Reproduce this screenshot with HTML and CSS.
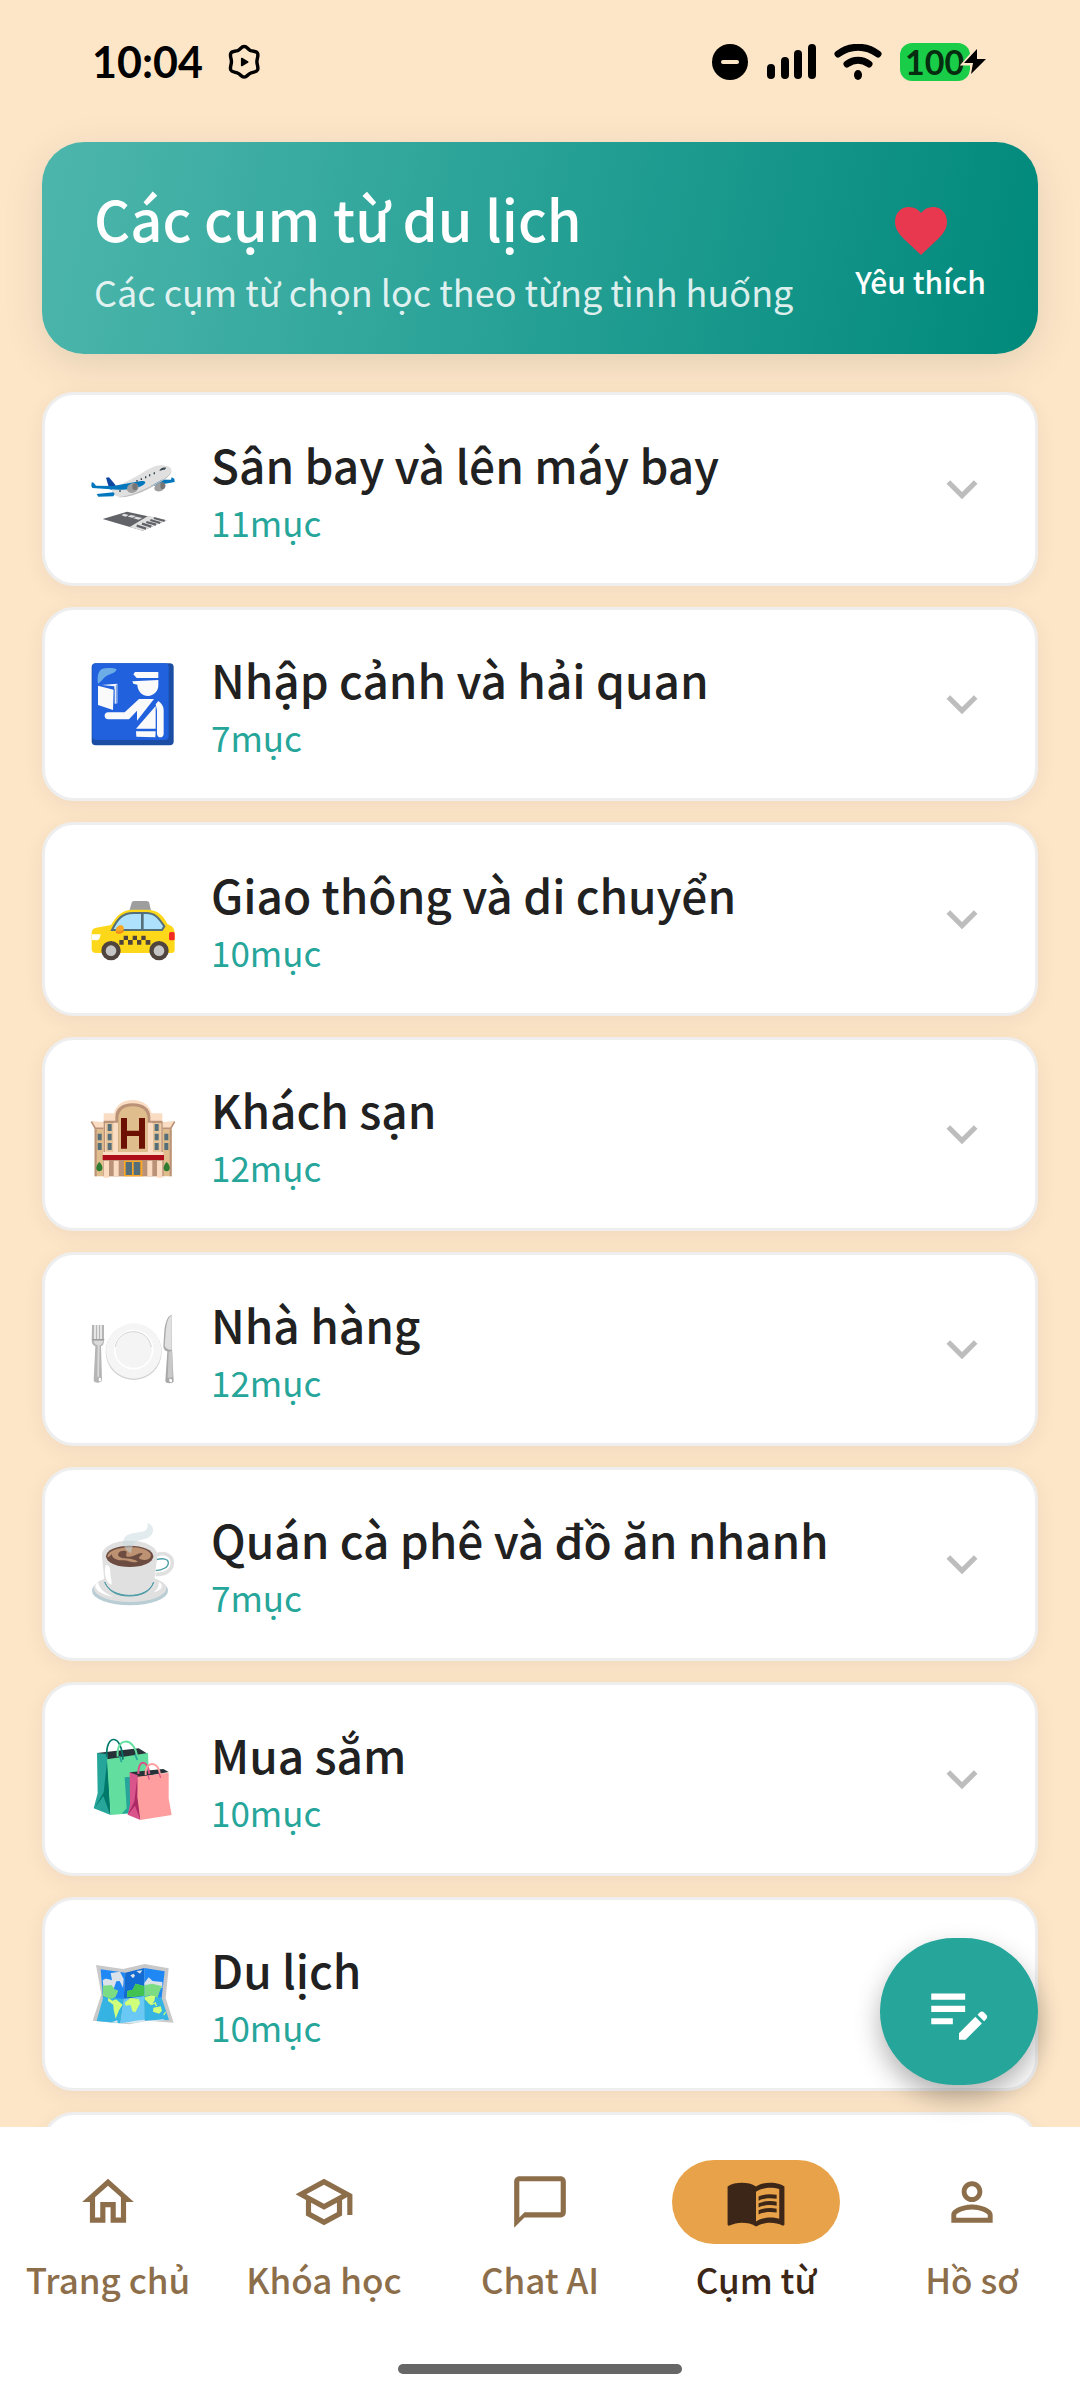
FILE: index.html
```html
<!DOCTYPE html>
<html lang="vi">

<head>
    <meta charset="UTF-8">
    <meta name="viewport" content="width=device-width, initial-scale=1.0">
    <title>Các cụm từ du lịch</title>
    <link rel="stylesheet" href="styles.css">
</head>

<body>
    <div class="app">
        <div class="status">
            <div class="status-left">
                <span class="clock">10:04</span>
                <svg class="hex" width="32" height="36" viewBox="662 136 93 104">
                    <path d="M709 143c9 0 10 8 19 12 9 3 17 1 20 8 3 8-2 15-2 24s5 16 2 24c-3 7-11 5-20 9-9 3-10 12-19 12s-10-9-19-12c-9-4-17-2-20-9-3-8 2-15 2-24s-5-16-2-24c3-7 11-5 20-8 9-4 10-12 19-12z" fill="none" stroke="#000" stroke-width="10"/>
                    <path d="M702 178l17 10-17 10z" stroke="#000" stroke-width="5" stroke-linejoin="round"/>
                </svg>
            </div>
            <div class="status-right">
                <svg class="dnd" width="36" height="36" viewBox="0 0 36 36">
                    <circle cx="18" cy="18" r="18"/>
                    <path d="M11 18h14" stroke="#fde6c8" stroke-width="4" stroke-linecap="round"/>
                </svg>
                <svg class="signal" width="50" height="36" viewBox="0 0 50 36">
                    <path d="M5 24v7M19 17v14M32 10v21M46 4v27" stroke="#000" stroke-width="8" stroke-linecap="round"/>
                </svg>
                <svg class="wifi" width="48" height="36" viewBox="0 0 48 36">
                    <path d="M4 10c12-9 28-9 40 0M13 20c7-5 15-5 22 0" fill="none" stroke="#000" stroke-width="7" stroke-linecap="round"/>
                    <ellipse cx="24" cy="31" rx="4" ry="5"/>
                </svg>
                <div class="battery">
                    <span>100</span>
                    <svg class="bolt" width="30" height="32" viewBox="0 0 30 32">
                        <path d="M17 2L3 18h9l-1 11L27 13h-9z" stroke="#fde6c8" stroke-width="3"/>
                        <path d="M17 3L4 17h9l-2 11L26 13h-9z"/>
                    </svg>
                </div>
            </div>
        </div>

        <header class="banner">
            <div>
                <h1>Các cụm từ du lịch</h1>
                <p>Các cụm từ chọn lọc theo từng tình huống</p>
            </div>
            <button class="favorite" type="button">
                <svg width="52" height="48" viewBox="0 0 52 48">
                    <path d="M26 48L9 32C3 26 0 21 0 15 0 6 6 0 14 0c5 0 9 2 12 6 3-4 7-6 12-6 8 0 14 6 14 15 0 6-3 11-9 17z" fill="#e8384f"/>
                </svg>
                Yêu thích
            </button>
        </header>

        <main class="content">
            <div class="list">
                <button class="card" type="button">
                    <!-- plane taking off -->
                    <svg class="emoji" viewBox="184 199 252 252">
                        <path d="M229 291l9-1 20 24-8 14-11-3z" fill="#0d47a1"/>
                        <path d="M340 296l84 1 2-7 8 4 1 10-70 13z" fill="#0277bd"/>
                        <path d="M247 326c25-14 70-35 103-57 20-12 42-18 55-14 13 1 20 5 20 14-3 14-25 27-55 44-35 19-68 35-92 36-21 0-32-8-31-23z" fill="#e0e0e0"/>
                        <path d="M265 349c40-3 83-24 122-46 22-12 37-24 38-35 2 16-20 30-53 48-35 20-77 37-107 33z" fill="#bdbdbd"/>
                        <path d="M389 271c3-8 9-12 21-10l-5 6c-6 0-10 2-16 4z" fill="#37474f"/>
                        <path d="M186 305l6 1 7 9 50 1 86-15c10-1 15 2 10 8-10 12-50 18-80 18l-77-5-3-6z" fill="#0277bd"/>
                        <path d="M201 340l50-5 4 5-4 7-45 1z" fill="#0277bd"/>
                        <ellipse cx="309" cy="322" rx="18" ry="14" fill="#9e9e9e" transform="rotate(-25 309 322)"/>
                        <ellipse cx="316" cy="318" rx="8" ry="10" fill="#757575"/>
                        <ellipse cx="391" cy="319" rx="18" ry="12" fill="#9e9e9e" transform="rotate(-25 391 319)"/>
                        <ellipse cx="399" cy="315" rx="7" ry="10" fill="#757575"/>
                        <path d="M322 298v5M335 293v5M348 287v6M360 281v6M374 275v6M271 328v6" stroke="#37474f" stroke-width="4"/>
                        <path d="M219 415l73-22 119 26-72 31z" fill="#616368"/>
                        <path d="M355 406l56 13-72 31-39-11z" fill="#e0e0e0"/>
                        <path d="M373 412l32 9M362 418l30 9M350 424l29 8M337 429l28 9M321 435l28 9" stroke="#616368" stroke-width="7"/>
                        <path d="M283 399l14 4-9 5-13-4zM303 403l16 3-10 5-15-3zM320 408l18 4-11 5-16-4z" fill="#e0e0e0"/>
                    </svg>
                    <span class="text"><span class="title">Sân bay và lên máy bay</span><span class="count">11mục</span></span>
                    <svg class="chevron" viewBox="0 0 24 24"><path d="M7.41 8.59L12 13.17l4.59-4.58L18 10l-6 6-6-6z"/></svg>
                </button>

                <button class="card" type="button">
                    <!-- passport control -->
                    <svg class="emoji" viewBox="184 846 252 252">
                        <rect x="186" y="850" width="246" height="246" rx="12" fill="#1a4da3"/>
                        <rect x="188" y="850" width="229" height="230" rx="12" fill="#2161de"/>
                        <path d="M205 911c-3-22 1-39 12-44 13-5 36-4 44 1-3 10-12 11-27 18-15 8-14 16-29 25z" fill="#6cade8"/>
                        <g fill="#fafafa">
                            <path d="M205 917l47 12-2 61-45-15z"/>
                            <path d="M215 915l48-4v59l-9 1v-52z"/>
                            <path d="M316 876h70v18h-65l-10-11z"/>
                            <path d="M308 904l78-4v16c0 18-14 32-31 32s-31-14-32-34l-12-3z"/>
                            <path d="M328 957h45l-51 65v-30l-24 26h-62c-15 0-15-21 0-21h49z"/>
                            <path d="M378 978v68h-59zM319 1054h59l-1 18-57-2z"/>
                            <path d="M386 963c11 8 16 16 16 28v70c0 15-20 14-20 0v-70l-4-18z"/>
                        </g>
                        <path d="M205 914l49 13v63M260 914v55" fill="none" stroke="#2161de" stroke-width="2"/>
                    </svg>
                    <span class="text"><span class="title">Nhập cảnh và hải quan</span><span class="count">7mục</span></span>
                    <svg class="chevron" viewBox="0 0 24 24"><path d="M7.41 8.59L12 13.17l4.59-4.58L18 10l-6 6-6-6z"/></svg>
                </button>

                <button class="card" type="button">
                    <!-- taxi -->
                    <svg class="emoji" viewBox="184 201 252 252">
                        <path d="M299 302l8-27 6-2h39l6 3 6 26z" fill="#9e9e9e"/>
                        <path d="M186 367c1-9 6-12 14-14l44-8c18-30 35-46 65-46h42c31 0 49 15 63 44 15 5 21 13 21 28v50c0 5-4 8-9 8H200c-10 0-14-5-14-13z" fill="#fdd81a"/>
                        <path d="M247 360c17-35 32-51 64-51h38c27 0 38 14 55 40l-7 11z" fill="#aee2fc" stroke="#546e7a" stroke-width="6"/>
                        <path d="M338 307v53" stroke="#546e7a" stroke-width="8"/>
                        <path d="M187 373h26c-2 12-5 19-12 18l-14-1z" fill="#fff"/>
                        <rect x="418" y="366" width="17" height="25" rx="5" fill="#f22c24"/>
                        <path d="M257 365c2-14 9-21 19-19 7 2 8 10 4 19-4 8-16 8-23 0z" fill="#f9a825"/>
                        <path d="M259 366c8 3 17 2 22-4" fill="none" stroke="#ef8c1a" stroke-width="6"/>
                        <path d="M282 377h13v13h-13zM309 377h13v13h-13zM335 377h13v13h-13zM269 390h13v14h-13zM295 390h14v14h-14zM322 390h13v14h-13zM348 390h14v14h-14z" fill="#4e433d"/>
                        <circle cx="244" cy="422" r="29" fill="#50443e"/>
                        <circle cx="244" cy="422" r="16" fill="#c5c5c5"/>
                        <circle cx="388" cy="422" r="29" fill="#50443e"/>
                        <circle cx="388" cy="422" r="16" fill="#c5c5c5"/>
                    </svg>
                    <span class="text"><span class="title">Giao thông và di chuyển</span><span class="count">10mục</span></span>
                    <svg class="chevron" viewBox="0 0 24 24"><path d="M7.41 8.59L12 13.17l4.59-4.58L18 10l-6 6-6-6z"/></svg>
                </button>

                <button class="card" type="button">
                    <!-- hotel -->
                    <svg class="emoji" viewBox="184 846 252 252">
                        <path d="M195 950h231v149H195z" fill="#dfbd8c"/>
                        <path d="M198 950v149M423 950v149" stroke="#ba9278" stroke-width="6"/>
                        <path d="M184 933l38 3v22h-26zM436 933l-38 3v22h27z" fill="#fadcc3"/>
                        <path d="M185 935l12 20h25M435 935l-12 20h-25" fill="none" stroke="#ba9278" stroke-width="5"/>
                        <path d="M222 1040V910h31c6-25 27-40 56-40s50 15 57 40h32v130z" fill="#fadcc3"/>
                        <path d="M222 932h35v-10c0-27 20-42 52-42s53 15 53 42v10h36v8h-36v90H257v-90h-35z" fill="#ba9278"/>
                        <path d="M266 1030V925c0-23 17-36 43-36s45 13 45 36v105z" fill="#dfbd8c"/>
                        <path d="M228 940h23v85h-23zM370 940h23v85h-23z" fill="#e6c499"/>
                        <path d="M252 938h13v90h-13zM354 938h14v90h-14z" fill="#fadcc3"/>
                        <path d="M224 936v94M397 936v94" stroke="#ba9278" stroke-width="4"/>
                        <path d="M234 942h12v21h-12zM234 971h12v20h-12zM234 999h12v21h-12zM375 942h12v21h-12zM375 971h12v20h-12zM375 999h12v21h-12zM204 971h12v20h-12zM204 999h12v21h-12zM404 971h12v20h-12zM404 999h12v21h-12z" fill="#546e7a"/>
                        <path d="M274 924h18v38h36v-38h18v92h-18v-38h-36v38h-18z" fill="#6d1104"/>
                        <path d="M220 1026h182v73H220z" fill="#ba9278"/>
                        <path d="M220 1026h182v9H220z" fill="#fadcc3"/>
                        <path d="M222 1052h16v51h-16zM252 1052h15v47h-15zM353 1052h15v47h-15zM382 1052h16v51h-16z" fill="#fadcc3"/>
                        <path d="M219 1035h184v15H219z" fill="#ad0d18"/>
                        <path d="M283 1052h55v47h-55z" fill="#ffa726"/>
                        <path d="M288 1056h19v39h-19zM312 1056h20v39h-20z" fill="#546e7a"/>
                        <path d="M209 1056c14 12 11 28 0 28s-13-16 0-28zM411 1056c14 12 11 28 0 28s-13-16 0-28z" fill="#2e7d32"/>
                    </svg>
                    <span class="text"><span class="title">Khách sạn</span><span class="count">12mục</span></span>
                    <svg class="chevron" viewBox="0 0 24 24"><path d="M7.41 8.59L12 13.17l4.59-4.58L18 10l-6 6-6-6z"/></svg>
                </button>

                <button class="card" type="button">
                    <!-- fork, plate, knife -->
                    <svg class="emoji" viewBox="184 202 252 252">
                        <circle cx="312" cy="337" r="84" fill="#cfcfcf"/>
                        <circle cx="312" cy="334" r="83" fill="#f5f5f5"/>
                        <circle cx="312" cy="330" r="57" fill="#f4f4f4" stroke="#fff" stroke-width="5"/>
                        <path d="M257 322c4-28 26-46 54-46s49 18 54 46" fill="none" stroke="#d5d5d5" stroke-width="3"/>
                        <path d="M187 256h7v42h4v-42h5v42h4v-42h5v42h4v-42h7v45c0 12-3 17-9 19l3 101c0 11-26 11-25 0l5-101c-7-3-11-9-11-19z" fill="#b5b5b5"/>
                        <path d="M192 303h28c0 8-4 12-10 14l-2 94h-5l1-94c-7-2-11-7-12-14z" fill="#dadada"/>
                        <path d="M208 415c5-3 8 2 6 9-3 4-9 1-6-9z" fill="#fafafa"/>
                        <path d="M187 300h37" stroke="#9b9b9b" stroke-width="3"/>
                        <path d="M426 225c-13 3-19 24-22 49l-3 47c2 9 6 13 12 14l-6 89c0 9 26 9 25 0l-5-92z" fill="#a9a9a9"/>
                        <path d="M426 227c-11 5-16 25-18 49l-3 43c4 9 12 12 21 11z" fill="#e0e0e0"/>
                        <path d="M417 336l11-3 1 80-15 2z" fill="#c8c8c8"/>
                        <path d="M419 418c6-3 10 2 8 8-4 4-11 0-8-8z" fill="#fafafa"/>
                    </svg>
                    <span class="text"><span class="title">Nhà hàng</span><span class="count">12mục</span></span>
                    <svg class="chevron" viewBox="0 0 24 24"><path d="M7.41 8.59L12 13.17l4.59-4.58L18 10l-6 6-6-6z"/></svg>
                </button>

                <button class="card" type="button">
                    <!-- hot coffee -->
                    <svg class="emoji" viewBox="184 849 252 252">
                        <ellipse cx="301" cy="1055" rx="114" ry="44" fill="#b9cdd4"/>
                        <ellipse cx="301" cy="1048" rx="109" ry="41" fill="#e0e0e0"/>
                        <path d="M205 1028c-20 16 0 36 45 45-30-13-42-27-45-45zM388 1029c16 10 9 25-16 31 12-9 15-18 16-31z" fill="#fff"/>
                        <path d="M378 948c28-11 50 2 50 22 1 23-21 38-50 36" fill="none" stroke="#e0e0e0" stroke-width="11"/>
                        <path d="M380 962c21-6 36-2 36 9 0 14-18 23-38 24" fill="none" stroke="#4d9ca6" stroke-width="4"/>
                        <path d="M217 950c0-27 35-45 83-45s83 18 83 45l-9 74c-5 32-37 50-74 50-36 0-66-16-76-50z" fill="#e0e0e0"/>
                        <path d="M225 1029c16 50 128 57 147 0-9 30-37 42-73 42s-60-11-74-42z" fill="#4d9ca6" stroke="#4d9ca6" stroke-width="3"/>
                        <path d="M228 978c12 0 14 10 14 24 1 14 6 28 3 35-15-5-24-31-17-59z" fill="#fff"/>
                        <ellipse cx="300" cy="952" rx="71" ry="32" fill="#6d4c41"/>
                        <path d="M234 955c-4-20 39-33 81-30 36 3 55 18 47 30-6 10-20 10-31 5-10-5 10-13 7-17-6-6-31 14-45 10-9-3 3-14-5-17-16-5-27 8-21 16 9 10 42 3 58 16-20 6-26-4-44-4-15 0-36-4-34-20-3 5-7 8-13 11z" fill="#bc9272"/>
                        <path d="M354 852c12 4 19 15 15 28-5 17-23 20-40 24-17 5-21 17-25 39-17-9-28-27-22-42 9-23 47-18 62-25 10-5 11-15 10-24z" fill="#c5d8dd" opacity=".5"/>
                    </svg>
                    <span class="text"><span class="title">Quán cà phê và đồ ăn nhanh</span><span class="count">7mục</span></span>
                    <svg class="chevron" viewBox="0 0 24 24"><path d="M7.41 8.59L12 13.17l4.59-4.58L18 10l-6 6-6-6z"/></svg>
                </button>

                <button class="card" type="button">
                    <!-- shopping bags -->
                    <svg class="emoji" viewBox="184 204 252 252">
                        <path d="M202 252l125-14 28 17-123 19z" fill="#263238"/>
                        <path d="M202 252l31 3 10 183-51-20 12-45z" fill="#26a69a"/>
                        <path d="M233 268l9 170-21-57-27 37 28-48z" fill="#00796b"/>
                        <path d="M232 271l123-19 7 176-119 10z" fill="#62df9f"/>
                        <path d="M285 325l36-3-5 109-40 3 15-16z" fill="#26a69a"/>
                        <path d="M231 263c-3-70 45-70 49 9" fill="none" stroke="#00796b" stroke-width="5"/>
                        <path d="M264 263c-6-60 51-60 58-1" fill="none" stroke="#62df9f" stroke-width="6"/>
                        <path d="M270 261l6 19M316 256l7 17" stroke="#26a69a" stroke-width="5"/>
                        <path d="M300 310l101-10 16 9-94 18z" fill="#263238"/>
                        <path d="M300 310l24 9 8 134-38-16 7-30z" fill="#d9548a"/>
                        <path d="M323 326l9 127-16-43-22 28 20-41z" fill="#ad2a66"/>
                        <path d="M324 323l93-12v77l9 50-94 15-9-70z" fill="#ff9e9e"/>
                        <path d="M326 315c-2-45 29-45 33 0" fill="none" stroke="#d9548a" stroke-width="6"/>
                        <path d="M348 318c-4-43 39-44 43-3" fill="none" stroke="#ff9e9e" stroke-width="6"/>
                        <path d="M355 318l4 14M388 313l5 13" stroke="#d9548a" stroke-width="4"/>
                    </svg>
                    <span class="text"><span class="title">Mua sắm</span><span class="count">10mục</span></span>
                    <svg class="chevron" viewBox="0 0 24 24"><path d="M7.41 8.59L12 13.17l4.59-4.58L18 10l-6 6-6-6z"/></svg>
                </button>

                <button class="card" type="button">
                    <!-- world map -->
                    <svg class="emoji" viewBox="184 849 252 252">
                        <path d="M199 888l81 12 65-15 72 13-9 89 24 74-78-6-56 11-109-11 26-79z" fill="#c9c9c9"/>
                        <path d="M213 901l74 10-5 79h-62z" fill="#1f88f5"/>
                        <path d="M287 911l57-14v92h-62z" fill="#126ad3"/>
                        <path d="M344 897l61 10-9 79-52 3z" fill="#1f88f5"/>
                        <path d="M221 984l62 6-11 73-71-7z" fill="#35b3e2"/>
                        <path d="M283 990l60-9 3 74-74 8z" fill="#69c9f4"/>
                        <path d="M343 981l53 5 22 67-73 2z" fill="#35b3e2"/>
                        <path d="M219 934c8-9 17-4 28 0l-4-22 28-4 11 22-2 26-10-20-10 1-7 20-32-6zM302 919l10-5 4 6-6 8zM320 906l18-2-7 10zM344 942l13-17 12 11 29 3v18l-53-4z" fill="#dbe2e9"/>
                        <path d="M219 950l27-2 8 12 12 5-9 20-12 4-25-7zM293 966l16-4 9-18 25 7v29l-51 5zM344 949l24-5 29 8-8 18-5 16-23-8-17 5z" fill="#7bdc83"/>
                        <path d="M293 966l16-4 9-18 25 7v29l-51 5z" fill="#40c351"/>
                        <path d="M235 987l14 8 10-4 20 16-11 17-10 25-6-26-1-16-16-11zM285 1001l17-14 26 3 3 13-14 27-9-3-5-19-15 2zM345 985l18-6 14 3-3 14-10 13-19-18zM371 1016l22-4 4 14-9 8-18-6z" fill="#d0ff7a"/>
                        <path d="M355 1000l12 6 10-4 3 9M402 1038l6-9" fill="none" stroke="#d0ff7a" stroke-width="4"/>
                        <path d="M245 1060l18-6 1 8zM281 1062l37-7 27-3 1 5-33 6zM350 1056l50-5 8 3-32 2z" fill="#d7e8ef"/>
                    </svg>
                    <span class="text"><span class="title">Du lịch</span><span class="count">10mục</span></span>
                    <svg class="chevron" viewBox="0 0 24 24"><path d="M7.41 8.59L12 13.17l4.59-4.58L18 10l-6 6-6-6z"/></svg>
                </button>

                <button class="card" type="button" aria-label="Mục tiếp theo"></button>
            </div>

            <button class="fab" type="button" aria-label="Ghi chú">
                <svg width="74" height="74" viewBox="0 0 24 24" fill="#fff">
                    <path d="M3 10h11v2H3v-2zm0-2h11V6H3v2zm0 8h7v-2H3v2zm15.01-3.13l.71-.71c.39-.39 1.02-.39 1.41 0l.71.71c.39.39.39 1.02 0 1.41l-.71.71-2.12-2.12zm-.71.71l-5.3 5.3V21h2.12l5.3-5.3-2.12-2.12z"/>
                </svg>
            </button>
        </main>

        <nav class="nav">
            <div class="tabs">
                <a class="tab" href="#home">
                    <span class="pill"><svg viewBox="0 0 24 24"><path d="M12 5.69l5 4.5V18h-2v-6H9v6H7v-7.81l5-4.5M12 3L2 12h3v8h6v-6h2v6h6v-8h3L12 3z"/></svg></span>
                    Trang chủ
                </a>
                <a class="tab" href="#course">
                    <span class="pill"><svg viewBox="0 0 24 24"><path d="M12 3L1 9l4 2.18v6L12 21l7-3.82v-6l2-1.09V17h2V9L12 3zm6.82 6L12 12.72 5.18 9 12 5.28 18.82 9zM17 15.99l-5 2.73-5-2.73v-3.72L12 15l5-2.73v3.72z"/></svg></span>
                    Khóa học
                </a>
                <a class="tab" href="#chat">
                    <span class="pill"><svg viewBox="0 0 24 24"><path d="M20 2H4c-1.1 0-2 .9-2 2v18l4-4h14c1.1 0 2-.9 2-2V4c0-1.1-.9-2-2-2zm0 14H6l-2 2V4h16v12z"/></svg></span>
                    Chat AI
                </a>
                <a class="tab active" href="#phrases">
                    <span class="pill"><svg viewBox="0 0 24 24"><path d="M21 5c-1.11-.35-2.33-.5-3.5-.5-1.95 0-4.05.4-5.5 1.5-1.45-1.1-3.55-1.5-5.5-1.5S2.45 4.9 1 6v14.65c0 .25.25.5.5.5.1 0 .15-.05.25-.05C3.1 20.45 5.05 20 6.5 20c1.95 0 4.05.4 5.5 1.5 1.35-.85 3.8-1.5 5.5-1.5 1.65 0 3.35.3 4.75 1.05.1.05.15.05.25.05.25 0 .5-.25.5-.5V6c-.6-.45-1.25-.75-2-1zm0 13.5c-1.1-.35-2.3-.5-3.5-.5-1.7 0-4.15.65-5.5 1.5V8c1.35-.85 3.8-1.5 5.5-1.5 1.2 0 2.4.15 3.5.5v11.5z"/><path d="M17.5 10.5c.88 0 1.73.09 2.5.26V9.24c-.79-.15-1.64-.24-2.5-.24-1.7 0-3.24.29-4.5.83v1.66c1.13-.64 2.7-.99 4.5-.99zM13 12.49v1.66c1.13-.64 2.7-.99 4.5-.99.88 0 1.73.09 2.5.26V11.9c-.79-.15-1.64-.24-2.5-.24-1.7 0-3.24.3-4.5.83zM17.5 14.33c-1.7 0-3.24.29-4.5.83v1.66c1.13-.64 2.7-.99 4.5-.99.88 0 1.73.09 2.5.26v-1.52c-.79-.16-1.64-.24-2.5-.24z"/></svg></span>
                    Cụm từ
                </a>
                <a class="tab" href="#profile">
                    <span class="pill"><svg viewBox="0 0 24 24"><path d="M12 5.9c1.16 0 2.1.94 2.1 2.1s-.94 2.1-2.1 2.1S9.9 9.16 9.9 8s.94-2.1 2.1-2.1m0 9c2.97 0 6.1 1.46 6.1 2.1v1.1H5.9V17c0-.64 3.13-2.1 6.1-2.1M12 4C9.79 4 8 5.79 8 8s1.79 4 4 4 4-1.79 4-4-1.79-4-4-4zm0 9c-2.67 0-8 1.34-8 4v3h16v-3c0-2.66-5.33-4-8-4z"/></svg></span>
                    Hồ sơ
                </a>
            </div>
            <div class="home-bar"></div>
        </nav>
    </div>
</body>

</html>
```
FILE: styles.css
```css
* {
    margin: 0;
    padding: 0;
    box-sizing: border-box;
}

body {
    background-color: #fde6c8;
    font-family: "Noto Sans CJK JP", "Noto Sans", sans-serif;
}

button {
    border: 0;
    background: none;
    font-family: inherit;
    cursor: pointer;
}

.app {
    display: flex;
    flex-direction: column;
    height: 100vh;
    overflow: hidden;
}

/* status bar */
.status {
    display: flex;
    justify-content: space-between;
    align-items: center;
    padding: 37px 92px;
    margin-bottom: 18px;
    font-family: Lato, sans-serif;
    font-weight: 700;
}

.status-left {
    display: flex;
    align-items: center;
    gap: 25px;
}

.clock {
    font-size: 43px;
    line-height: 50px;
}

.status-right {
    display: flex;
    align-items: center;
    gap: 18px;
}

.battery {
    position: relative;
    width: 70px;
    height: 38px;
    margin-right: 18px;
    padding-left: 5px;
    border-radius: 12px;
    background-color: #1acd48;
    color: #062d10;
    font-size: 34px;
    line-height: 38px;
}

.bolt {
    position: absolute;
    right: -20px;
    top: 3px;
}

/* top banner */
.banner {
    display: flex;
    justify-content: space-between;
    align-items: center;
    margin: 0 42px;
    padding: 38px 52px;
    border-radius: 42px;
    background: linear-gradient(102deg, #4db6ac, #26a095 50%, #00897b);
    box-shadow: 0 10px 42px rgba(0, 0, 0, 0.1);
    color: #fff;
}

.banner h1 {
    font-size: 56px;
    line-height: 76px;
    font-weight: 500;
    margin-bottom: 10px;
}

.banner p {
    font-size: 36px;
    line-height: 50px;
    color: rgba(255, 255, 255, 0.85);
}

.favorite {
    display: flex;
    flex-direction: column;
    align-items: center;
    gap: 4px;
    padding-top: 14px;
    color: #fff;
    font-size: 30px;
    line-height: 44px;
    font-weight: 500;
}

/* category list */
.content {
    position: relative;
    flex: 1;
    min-height: 0;
}

.list {
    display: flex;
    flex-direction: column;
    gap: 21px;
    height: 100%;
    padding: 38px 42px 0;
    overflow-y: auto;
    scrollbar-width: none;
}

.card {
    display: flex;
    align-items: center;
    flex-shrink: 0;
    min-height: 194px;
    padding: 36px 42px 36px 46px;
    border: 3px solid #eee;
    border-radius: 32px;
    background-color: #fff;
    box-shadow: 0 5px 21px rgba(0, 0, 0, 0.06);
    text-align: left;
}

.emoji {
    width: 84px;
    height: 84px;
    margin-right: 36px;
    flex-shrink: 0;
    overflow: visible;
}

.text {
    display: flex;
    flex-direction: column;
    flex: 1;
}

.title {
    font-size: 46px;
    line-height: 66px;
    font-weight: 500;
    color: #212121;
}

.count {
    font-size: 35px;
    line-height: 50px;
    color: #26a69a;
}

.chevron {
    width: 62px;
    height: 62px;
    fill: #bdbdbd;
}

.fab {
    position: absolute;
    right: 42px;
    bottom: 42px;
    display: flex;
    align-items: center;
    justify-content: center;
    width: 158px;
    height: 147px;
    border-radius: 74px;
    background-color: #26a69a;
    box-shadow: 0 12px 26px rgba(0, 0, 0, 0.3);
}

/* bottom navigation */
.nav {
    position: relative;
    padding: 33px 0 26px;
    background-color: #fff;
}

.tabs {
    display: grid;
    grid-template-columns: repeat(5, 1fr);
}

.tab {
    display: flex;
    flex-direction: column;
    align-items: center;
    gap: 10px;
    color: #8d6e4b;
    font-size: 35px;
    line-height: 50px;
    font-weight: 500;
    text-decoration: none;
    white-space: nowrap;
}

.pill {
    display: flex;
    align-items: center;
    justify-content: center;
    width: 168px;
    height: 84px;
    border-radius: 42px;
}

.pill svg {
    width: 62px;
    height: 62px;
    fill: currentColor;
}

.active {
    color: #3b2617;
}

.active .pill {
    background-color: #e8a34a;
}

.home-bar {
    width: 284px;
    height: 10px;
    margin: 60px auto 0;
    border-radius: 5px;
    background-color: #666;
}
```
